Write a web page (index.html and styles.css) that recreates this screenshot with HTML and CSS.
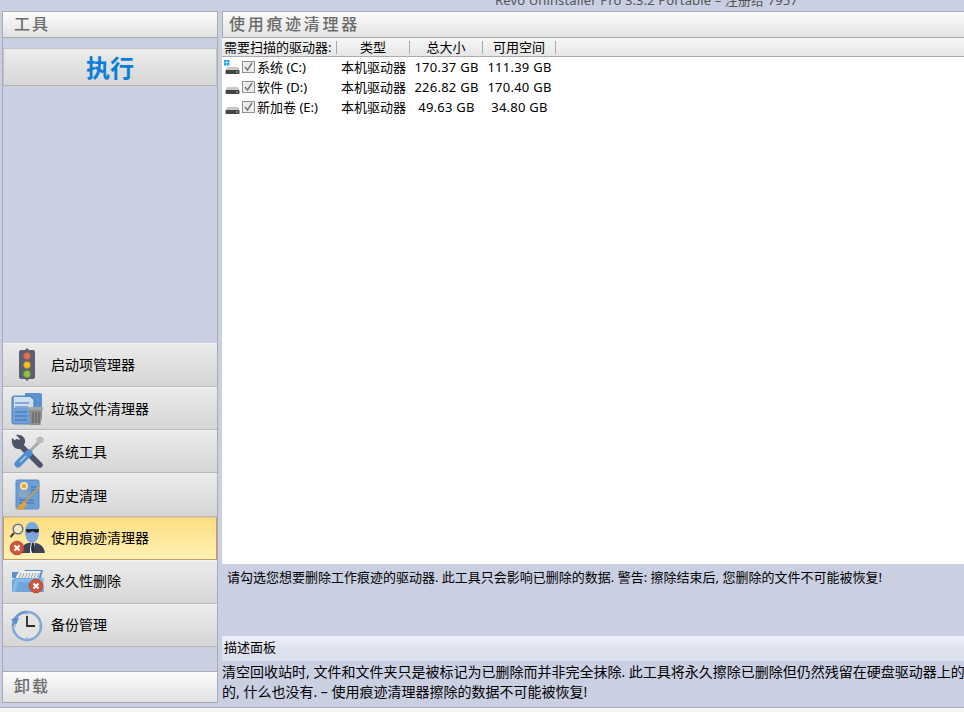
FILE: index.html
```html
<!DOCTYPE html>
<html lang="zh-CN">
<head>
<meta charset="utf-8">
<title>Revo Uninstaller Pro</title>
<link rel="stylesheet" href="styles.css">
</head>
<body>
<div class="app">
  <div class="titlebar"><span>Revo Uninstaller Pro 3.3.2 Portable – 注册给 7957</span></div>
  <div class="main">
    <aside class="sidebar">
      <div class="side-head">工具</div>
      <div class="side-body">
        <button class="run"><span>执行</span></button>
        <nav class="nav">
          <div class="nav-item">
            <svg class="ico" viewBox="0 0 40 40"><path d="M20 3l2 2h4a2 2 0 0 1 2 2v25a2 2 0 0 1-2 2h-4l-2 2-2-2h-4a2 2 0 0 1-2-2V7a2 2 0 0 1 2-2h4z" fill="#5c5f6e"/><circle cx="20" cy="11" r="3.400" fill="#e8704f" stroke="#a9604f" stroke-width=".8"/><circle cx="20" cy="20" r="3.400" fill="#f8c21a" stroke="#a98f3f" stroke-width=".8"/><circle cx="20" cy="29" r="3.400" fill="#8cc63f" stroke="#6f9a45" stroke-width=".8"/></svg>
            <span>启动项管理器</span>
          </div>
          <div class="nav-item lower">
            <svg class="ico" viewBox="0 0 40 40"><path d="M18 5h15a2 2 0 0 1 2 2v23a2 2 0 0 1-2 2H18z" fill="#5b93cf"/><path d="M7 8h17l4 4v24H7a2 2 0 0 1-2-2V10a2 2 0 0 1 2-2z" fill="#6fa2da" stroke="#4f80b9"/><path d="M7 9h16l3 3v8H7z" fill="#cfe0f3"/><path d="M8 15h14M8 19h13M8 24h12M8 28h12M8 32h12" stroke="#3c6ea8" stroke-width="1.200"/><path d="M22 22h13l-1.500 15H23.500z" fill="#8d8f8a"/><rect x="21" y="19" width="15" height="3" rx="1" fill="#a5a7a2"/><path d="M26 24v11M29 24v11M32 24v11" stroke="#666" stroke-width="1.300"/></svg>
            <span>垃圾文件清理器</span>
          </div>
          <div class="nav-item">
            <svg class="ico" viewBox="0 0 40 40"><path d="M10 10l23 23" stroke="#4f5368" stroke-width="5.500" stroke-linecap="round"/><path d="M5 6l5 4 3-3-4-4c5-1 10 2 9 8l-5 6c-6 1-9-5-8-11z" fill="#4f5368"/><path d="M33 9L21 21" stroke="#a9aba4" stroke-width="3" stroke-linecap="round"/><circle cx="33" cy="8" r="3.500" fill="#b9bbb4"/><path d="M22 21L11 32" stroke="#4f8fd0" stroke-width="7" stroke-linecap="round"/><path d="M19 24l-6 6" stroke="#a9ccef" stroke-width="1.500"/></svg>
            <span>系统工具</span>
          </div>
          <div class="nav-item lower">
            <svg class="ico" viewBox="0 0 40 40"><rect x="9" y="5" width="23" height="29" rx="1.500" fill="#6d9fd6" stroke="#5a8bc3"/><circle cx="17" cy="11" r="4" fill="#f5e3b2"/><circle cx="17" cy="11" r="2.200" fill="#f2a72c"/><rect x="12" y="16" width="9" height="6" fill="#8ea5bf"/><path d="M12 25h15M12 28h15M24 12h5M24 15h5M24 18h3" stroke="#3f6fa6"/><path d="M33 11L15 30" stroke="#c9a04a" stroke-width="1.800"/><path d="M17 26l3 3-4 6-7-1z" fill="#e0a13a"/></svg>
            <span>历史清理</span>
          </div>
          <div class="nav-item active higher">
            <svg class="ico" viewBox="0 0 40 40"><circle cx="11" cy="10" r="4.800" fill="#e6edf5" fill-opacity=".6" stroke="#6a6f77" stroke-width="1.500"/><path d="M7 14l-3.500 4" stroke="#3f3f46" stroke-width="2"/><path d="M13 34c1-6 4-9 8-10h8c5 1 8 4 9 10z" fill="#3d4350"/><path d="M23 24l2 10h-2zm1 0h4l-2 10z" fill="#e9eef5"/><path d="M25 24h2l.5 8-1.500 2-1.500-2z" fill="#2a2e38"/><path d="M18 13c0-6 3-10 7-10s7 4 7 10-3 11-7 11-7-5-7-11z" fill="#7aa7de"/><path d="M19 10h13v2.500c-2 2-4 1.500-5.500 0h-2c-1.500 1.500-3.500 2-5.500 0z" fill="#20242c"/><circle cx="10" cy="29" r="6.800" fill="#d1553c" stroke="#b9492f"/><path d="M7.500 26.500l5 5m0-5l-5 5" stroke="#fff" stroke-width="2.200"/></svg>
            <span>使用痕迹清理器</span>
          </div>
          <div class="nav-item higher">
            <svg class="ico" viewBox="0 0 40 40"><path d="M5 10h11l2-2h18l-2 8H5z" fill="#5f90c9"/><path d="M11 11l3-2h20l-3 8H8z" fill="#eef0f2"/><path d="M14 11l-2 5M17 11l-2 5M20 11l-2 5M23 11l-2 5M26 11l-2 5M29 11l-2 5M32 11l-2 5" stroke="#9aa0a8"/><path d="M5 30V18l3-2h28l1 14z" fill="#6ea6dd"/><path d="M5 30l3-13 29-1-1 4H12l-4 10z" fill="#86b8e8"/><circle cx="29" cy="24" r="6.800" fill="#d1553c" stroke="#b9492f"/><path d="M26.500 21.500l5 5m0-5l-5 5" stroke="#fff" stroke-width="2.200"/></svg>
            <span>永久性删除</span>
          </div>
          <div class="nav-item">
            <svg class="ico" viewBox="0 0 40 40"><circle cx="20" cy="21" r="14" fill="#e4e4e2" stroke="#7fa9d9" stroke-width="2.500"/><path d="M6 21a14 14 0 0 1 14-14" fill="none" stroke="#6b9ad2" stroke-width="2.500"/><path d="M4 14l8-1-3 7z" fill="#5f8fca"/><path d="M6 21a14 14 0 0 0 14 14 14 14 0 0 1-14-14z" fill="#c9c9c6"/><path d="M20 11v10h8" fill="none" stroke="#2b2b2b" stroke-width="1.800"/><path d="M20 9v1M20 32v1M32 21h1M8 21h1" stroke="#8a8a8a"/></svg>
            <span>备份管理</span>
          </div>
        </nav>
      </div>
      <div class="side-foot">卸载</div>
    </aside>
    <section class="content">
      <div class="content-head">使用痕迹清理器</div>
      <div class="cols">
        <div class="col col-name">需要扫描的驱动器:</div>
        <div class="col">类型</div>
        <div class="col">总大小</div>
        <div class="col">可用空间</div>
      </div>
      <div class="list">
        <div class="row">
          <div class="cell-name">
            <svg class="drive" viewBox="0 0 16 14"><path d="M0 0h2.500v2.500H0zM3 0h2.500v2.500H3zM0 3h2.500v2.500H0zM3 3h2.500v2.500H3z" fill="#1aa1e8"/><path d="M3 7h11l1.500 3H1.500z" fill="#c9c9c9"/><rect x="1.500" y="10" width="14" height="4" rx="1" fill="#454545"/><rect x="12" y="11.500" width="2" height="1" fill="#7fe07f"/></svg>
            <span class="check"><svg viewBox="0 0 11 10"><path d="M2 5l2.500 3 4.500-7" fill="none" stroke="#777" stroke-width="1.500"/></svg></span>
            <span>系统 (C:)</span>
          </div>
          <div>本机驱动器</div><div class="num">170.37 GB</div><div class="num">111.39 GB</div>
        </div>
        <div class="row">
          <div class="cell-name">
            <svg class="drive" viewBox="0 0 16 14"><path d="M3 7h11l1.500 3H1.500z" fill="#c9c9c9"/><rect x="1.500" y="10" width="14" height="4" rx="1" fill="#454545"/><rect x="12" y="11.500" width="2" height="1" fill="#7fe07f"/></svg>
            <span class="check"><svg viewBox="0 0 11 10"><path d="M2 5l2.500 3 4.500-7" fill="none" stroke="#777" stroke-width="1.500"/></svg></span>
            <span>软件 (D:)</span>
          </div>
          <div>本机驱动器</div><div class="num">226.82 GB</div><div class="num">170.40 GB</div>
        </div>
        <div class="row">
          <div class="cell-name">
            <svg class="drive" viewBox="0 0 16 14"><path d="M3 7h11l1.500 3H1.500z" fill="#c9c9c9"/><rect x="1.500" y="10" width="14" height="4" rx="1" fill="#454545"/><rect x="12" y="11.500" width="2" height="1" fill="#7fe07f"/></svg>
            <span class="check"><svg viewBox="0 0 11 10"><path d="M2 5l2.500 3 4.500-7" fill="none" stroke="#777" stroke-width="1.500"/></svg></span>
            <span>新加卷 (E:)</span>
          </div>
          <div>本机驱动器</div><div class="num">49.63 GB</div><div class="num">34.80 GB</div>
        </div>
      </div>
      <div class="info">请勾选您想要删除工作痕迹的驱动器. 此工具只会影响已删除的数据. 警告: 擦除结束后, 您删除的文件不可能被恢复!</div>
      <div class="desc-head">描述面板</div>
      <div class="desc">清空回收站时, 文件和文件夹只是被标记为已删除而并非完全抹除. 此工具将永久擦除已删除但仍然残留在硬盘驱动器上的的, 什么也没有. – 使用痕迹清理器擦除的数据不可能被恢复!</div>
    </section>
  </div>
  <div class="statusbar"></div>
</div>
</body>
</html>
```

FILE: styles.css
```css
* { box-sizing: border-box; }
html, body { margin: 0; padding: 0; }
body {
  background: #cacfe2;
  font-family: "Noto Sans", "Noto Sans CJK SC", sans-serif;
  color: #000;
  font-size: 13px;
}
.app {
  width: 964px;
  height: 712px;
  display: flex;
  flex-direction: column;
  overflow: hidden;
}
.titlebar {
  height: 11px;
  flex: none;
  padding-left: 495px;
  line-height: 0;
  font-size: 13px;
  letter-spacing: .13px;
  color: #555;
  overflow: hidden;
  white-space: nowrap;
}
.main {
  flex: none;
  height: 696px;
  display: flex;
  padding-left: 2px;
  gap: 4px;
}
.sidebar {
  width: 216px;
  flex: none;
  display: flex;
  flex-direction: column;
  height: 692px;
  border-left: 1px solid #a9abb3;
  border-right: 1px solid #a9abb3;
}
.side-head, .side-foot {
  flex: none;
  padding-left: 11px;
  font-size: 16px;
  letter-spacing: 2px;
  font-weight: 500;
  color: #6b6b6b;
  background: linear-gradient(#fcfcfc, #e2e2e2);
  border-top: 1px solid #a9abb3;
  border-bottom: 1px solid #a9abb3;
}
.side-head { height: 27px; line-height: 25px; }
.side-foot { height: 32px; line-height: 28px; }
.side-body {
  flex: 1;
  display: flex;
  flex-direction: column;
  justify-content: space-between;
  padding: 10px 0 24px;
  min-height: 0;
}
.run {
  display: block;
  width: 214px;
  height: 38px;
  padding: 0 0 2px;
  font-family: inherit;
  font-size: 24px;
  font-weight: 700;
  color: #0b7fd8;
  background: linear-gradient(#ececec, #d6d6d6);
  border: 1px solid #c4c4c4;
  border-bottom-color: #b5b5b5;
}
.nav { display: flex; flex-direction: column; }
.nav-item {
  height: 43.400px;
  display: flex;
  align-items: center;
  gap: 4px;
  padding-left: 4px;
  font-size: 14px;
  background: linear-gradient(#ebebeb, #d6d6d6);
  border-top: 1px solid #f2f2f2;
  border-bottom: 1px solid #b7b7b7;
}
.nav-item span { margin-bottom: 2px; }
.nav-item.lower span { margin-bottom: 0; }
.nav-item.higher span { margin-bottom: 4px; }
.nav-item.active {
  background: linear-gradient(#fedd82, #fff2b4);
  border: 1px solid #c39a66;
  border-top-color: #e3c78f;
  padding-left: 3px;
}
.ico { width: 40px; height: 40px; flex: none; display: block; }
.content {
  flex: none;
  width: 742px;
  display: flex;
  flex-direction: column;
}
.content-head {
  height: 27px;
  flex: none;
  padding-left: 6px;
  line-height: 25px;
  font-size: 16px;
  letter-spacing: 2.700px;
  font-weight: 500;
  color: #6b6b6b;
  background: linear-gradient(#fbfbfb, #e3e3e3);
  border-top: 1px solid #a9abb3;
  border-left: 1px solid #a9abb3;
  border-bottom: 1px solid #a9abb3;
}
.cols {
  height: 19px;
  flex: none;
  display: grid;
  grid-template-columns: 115px 73px 73px 73px;
  background: linear-gradient(#f7f7f7, #e6e6e6);
  border-bottom: 1px solid #a9abb3;
  align-items: center;
  line-height: 17px;
}
.col {
  height: 13px;
  line-height: 13px;
  text-align: center;
  border-right: 1px solid #a8a8a8;
}
.col-name { text-align: left; padding-left: 2px; white-space: nowrap; }
.list {
  flex: 1;
  background: #fff;
  min-height: 0;
}
.row {
  height: 20px;
  display: grid;
  grid-template-columns: 115px 73px 73px 73px;
  align-items: center;
  text-align: center;
  white-space: nowrap;
  line-height: 20px;
}
.num { letter-spacing: .25px; }
.cell-name {
  display: flex;
  align-items: center;
  text-align: left;
  padding-left: 2px;
}
.drive { width: 16px; height: 14px; flex: none; display: block; margin: 0 2px 0 0; }
.check {
  width: 13px;
  height: 12px;
  margin: 0 2px 0 0;
  flex: none;
  border: 1px solid #8f8f8f;
  background: #ececec;
  display: block;
}
.check svg { display: block; width: 11px; height: 10px; }
.info {
  flex: none;
  height: 72px;
  padding: 4px 0 0 5px;
  line-height: 18px;
  background: #cacfe2;
}
.desc-head {
  flex: none;
  height: 25px;
  padding-left: 2px;
  line-height: 22px;
  background: linear-gradient(#eef1f9, #dde1ee 55%);
}
.desc {
  flex: none;
  height: 46px;
  font-size: 14px;
  line-height: 20px;
  padding-top: 1px;
  width: 750px;
  background: #cacfe2;
}
.statusbar {
  flex: 1;
  background: #f6f6f6;
  border-top: 1px solid #a9abb3;
}
```
